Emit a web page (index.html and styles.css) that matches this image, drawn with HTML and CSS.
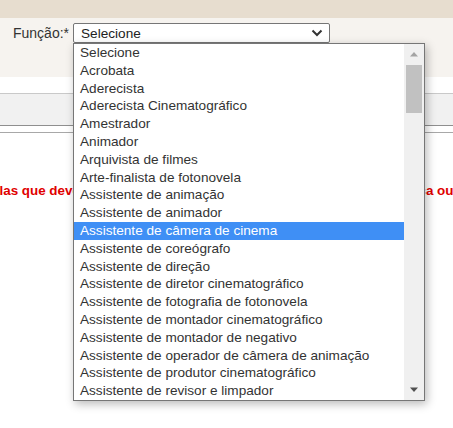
FILE: index.html
```html
<!DOCTYPE html>
<html lang="pt-BR">
<head>
<meta charset="utf-8">
<title>Função</title>
<link rel="stylesheet" href="styles.css">
</head>
<body>
<div class="topband"></div>
<div class="formpanel">
  <div class="field">
    <label class="label">Função:*</label>
    <div class="select">
      <span class="select-value">Selecione</span>
      <svg class="chev" width="12" height="8" viewBox="0 0 12 8"><path d="M1.5 1.5 L6 6 L10.5 1.5" fill="none" stroke="#333" stroke-width="2"/></svg>
    </div>
  </div>
</div>
<div class="gap"></div>
<div class="tabbar"></div>
<div class="rule"></div>
<div class="notice"><span class="notice-text">Selecione aquelas que deverão constar nos créditos do filme e na sua ficha técnica ou outros documentos.</span></div>

<div class="dropdown">
  <ul class="options">
    <li>Selecione</li>
    <li>Acrobata</li>
    <li>Aderecista</li>
    <li>Aderecista Cinematográfico</li>
    <li>Amestrador</li>
    <li>Animador</li>
    <li>Arquivista de filmes</li>
    <li>Arte-finalista de fotonovela</li>
    <li>Assistente de animação</li>
    <li>Assistente de animador</li>
    <li class="active">Assistente de câmera de cinema</li>
    <li>Assistente de coreógrafo</li>
    <li>Assistente de direção</li>
    <li>Assistente de diretor cinematográfico</li>
    <li>Assistente de fotografia de fotonovela</li>
    <li>Assistente de montador cinematográfico</li>
    <li>Assistente de montador de negativo</li>
    <li>Assistente de operador de câmera de animação</li>
    <li>Assistente de produtor cinematográfico</li>
    <li>Assistente de revisor e limpador</li>
  </ul>
  <div class="scrollbar">
    <svg class="arrow" width="10" height="6" viewBox="0 0 10 6"><path d="M1 5.5 L5 1 L9 5.5 Z" fill="#a3a3a3"/></svg>
    <div class="track"><div class="thumb"></div></div>
    <svg class="arrow" width="10" height="6" viewBox="0 0 10 6"><path d="M1 0.5 L5 5 L9 0.5 Z" fill="#505050"/></svg>
  </div>
</div>
</body>
</html>
```
FILE: styles.css
```css
html, body {
  margin: 0;
  padding: 0;
  background: #ffffff;
  font-family: "Liberation Sans", Arial, sans-serif;
  overflow: hidden;
}
body {
  width: 453px;
  height: 428px;
  position: relative;
}
.topband {
  height: 18px;
  background: #e7ddcf;
}
.formpanel {
  height: 59px;
  background: #f6f3ef;
  box-sizing: border-box;
  padding-top: 5px;
}
.field {
  display: flex;
  align-items: center;
  padding-left: 13px;
  gap: 4px;
}
.label {
  font-size: 14px;
  color: #333333;
}
.select {
  width: 257px;
  height: 20px;
  box-sizing: border-box;
  border: 1px solid #767676;
  border-radius: 2px;
  background: #ffffff;
  display: flex;
  align-items: center;
  justify-content: space-between;
  padding: 0 6px 0 7px;
}
.select-value {
  font-size: 13.6px;
  color: #222222;
}
.gap {
  height: 16px;
}
.tabbar {
  height: 31px;
  background: #f1f1f1;
  border-top: 1px solid #c9c9c9;
  border-bottom: 1px solid #8f8f8f;
}
.rule {
  margin-top: 6px;
  border-top: 1px solid #a8a8a8;
}
.notice {
  margin-top: 50px;
  white-space: nowrap;
  overflow: hidden;
  font-size: 13.4px;
  font-weight: bold;
  color: #e00000;
  line-height: 16px;
}
.notice-text {
  display: inline-block;
  margin-left: -98px;
}
.dropdown {
  position: absolute;
  left: 73px;
  top: 43px;
  width: 352px;
  height: 358px;
  box-sizing: border-box;
  border: 1px solid #767676;
  background: #ffffff;
  box-shadow: 2px 3px 9px rgba(0, 0, 0, 0.28);
  display: flex;
}
.options {
  list-style: none;
  margin: 0;
  padding: 0;
  flex: 1;
}
.options li {
  height: 17.8px;
  line-height: 17.8px;
  padding-left: 6px;
  font-size: 13.6px;
  color: #333333;
  white-space: nowrap;
}
.options li.active {
  background: #3f8ff5;
  color: #ffffff;
}
.scrollbar {
  width: 20px;
  background: #f0f0f0;
  display: flex;
  flex-direction: column;
  align-items: center;
}
.arrow {
  flex: none;
  margin: 7px 0;
}
.track {
  flex: 1;
  width: 100%;
  display: flex;
  justify-content: center;
}
.thumb {
  width: 16px;
  height: 48px;
  margin-top: 1px;
  background: #c1c1c1;
}
```
